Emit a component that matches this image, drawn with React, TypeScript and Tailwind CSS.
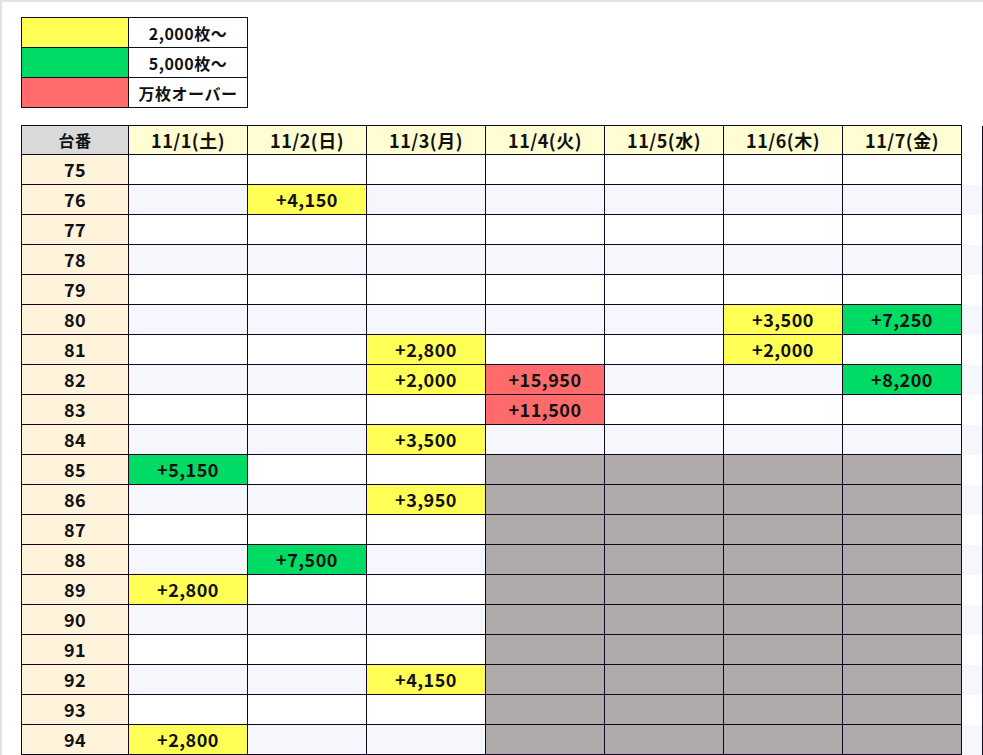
import React from 'react';

type Kind = 'y' | 'g' | 'r';

const days = ['11/1(土)', '11/2(日)', '11/3(月)', '11/4(火)', '11/5(水)', '11/6(木)', '11/7(金)'];

// 台番 -> { column index: [value, color] }
const hits: Record<number, Record<number, [string, Kind]>> = {
  76: { 1: ['+4,150', 'y'] },
  80: { 5: ['+3,500', 'y'], 6: ['+7,250', 'g'] },
  81: { 2: ['+2,800', 'y'], 5: ['+2,000', 'y'] },
  82: { 2: ['+2,000', 'y'], 3: ['+15,950', 'r'], 6: ['+8,200', 'g'] },
  83: { 3: ['+11,500', 'r'] },
  84: { 2: ['+3,500', 'y'] },
  85: { 0: ['+5,150', 'g'] },
  86: { 2: ['+3,950', 'y'] },
  88: { 1: ['+7,500', 'g'] },
  89: { 0: ['+2,800', 'y'] },
  92: { 2: ['+4,150', 'y'] },
  94: { 0: ['+2,800', 'y'] },
};

const kindBg: Record<Kind, string> = {
  y: 'bg-[#ffff55]',
  g: 'bg-[#00db66]',
  r: 'bg-[#ff6b6b]',
};

const rows = Array.from({ length: 20 }, (_, i) => 75 + i);

const font = { fontFamily: '"Noto Sans CJK JP", "Noto Sans", sans-serif' };

const App: React.FC = () => {
  return (
    <div
      className="w-[983px] h-[755px] overflow-hidden bg-white border-t-2 border-l-2 border-[#e2e2e2] text-[18px] font-bold tracking-[0.5px] text-[#111]"
      style={font}
    >
      {/* Legend */}
      <div className="ml-[19px] mt-[15px] w-[227px] border border-[#111] border-b-0">
        {[
          ['bg-[#ffff55]', '2,000枚～'],
          ['bg-[#00db66]', '5,000枚～'],
          ['bg-[#ff6b6b]', '万枚オーバー'],
        ].map(([bg, label]) => (
          <div key={label} className="flex h-[30px] border-b border-[#111]">
            <div className={`w-[107px] border-r border-[#111] ${bg}`} />
            <div className="flex-1 flex items-center justify-center text-[16px]">{label}</div>
          </div>
        ))}
      </div>

      {/* Table */}
      <div className="mt-[17px] ml-[19px] w-[962px]">
        <div className="flex h-[30px]">
          <div className="w-[108px] shrink-0 border border-[#140620] bg-[#d9d9d9] flex items-center justify-center text-[16px]">
            台番
          </div>
          {days.map((d) => (
            <div
              key={d}
              className="w-[119px] shrink-0 border-t border-r border-b border-[#140620] bg-[#fffdd2] flex items-center justify-center"
            >
              {d}
            </div>
          ))}
          <div className="w-[20px] shrink-0 bg-white" />
          <div className="w-[1px] shrink-0 mt-[1px] bg-[#140620]" />
        </div>
        {rows.map((n, i) => {
          const stripe = i % 2 === 1 ? 'bg-[#f5f7fd]' : 'bg-white';
          return (
            <div key={n} className={`flex h-[30px] ${stripe}`}>
              <div className="w-[108px] shrink-0 border-l border-r border-b border-[#140620] bg-[#fff3dc] flex items-center justify-center">
                {n}
              </div>
              {days.map((d, c) => {
                const hit = hits[n]?.[c];
                const gray = n >= 85 && c >= 3;
                const bg = hit ? kindBg[hit[1]] : gray ? 'bg-[#aeaaaa]' : stripe;
                return (
                  <div
                    key={d}
                    className={`w-[119px] shrink-0 border-r border-b border-[#140620] flex items-center justify-center ${bg}`}
                  >
                    {hit ? hit[0] : ''}
                  </div>
                );
              })}
              <div className="w-[20px] shrink-0" />
              <div className="w-[1px] shrink-0 bg-[#140620]" />
            </div>
          );
        })}
      </div>
    </div>
  );
};

export default App;
